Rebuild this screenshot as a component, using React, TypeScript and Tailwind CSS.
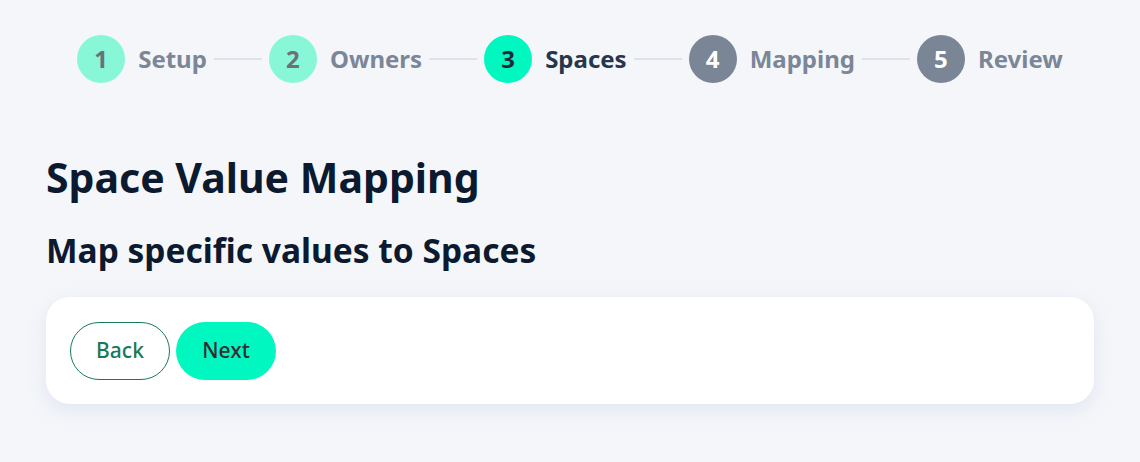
const steps = [
  { n: 1, label: 'Setup', state: 'done' },
  { n: 2, label: 'Owners', state: 'done' },
  { n: 3, label: 'Spaces', state: 'active' },
  { n: 4, label: 'Mapping', state: 'todo' },
  { n: 5, label: 'Review', state: 'todo' },
]

const circleClass = {
  done: 'bg-[#88f7d7] text-[#6e7077]',
  active: 'bg-[#00f7c0] text-[#1d2a3b]',
  todo: 'bg-[#7a8596] text-white',
}

const labelClass = {
  done: 'text-[#7b8698]',
  active: 'text-[#27364b]',
  todo: 'text-[#7b8698]',
}

const Stepper = () => (
  <div className="flex items-center justify-center">
    {steps.map((s, i) => (
      <div key={s.n} className="flex items-center">
        <div className="flex items-center gap-[13px]">
          <div
            className={`flex h-12 w-12 items-center justify-center rounded-full text-[24px] font-bold ${circleClass[s.state]}`}
          >
            {s.n}
          </div>
          <span className={`text-[24px] font-bold ${labelClass[s.state]}`}>{s.label}</span>
        </div>
        {i < steps.length - 1 && <div className="mx-[7px] h-[2px] w-12 bg-[#dde3ec]" />}
      </div>
    ))}
  </div>
)

export default function App() {
  return (
    <div
      className="min-h-[462px] bg-[#f4f6fa] px-[46px] pt-[35px]"
      style={{ fontFamily: '"Noto Sans", "Open Sans", sans-serif' }}
    >
      <Stepper />
      <h1 className="mt-[70px] text-[41px] leading-[48px] font-bold text-[#0c1a30]">
        Space Value Mapping
      </h1>
      <h2 className="mt-[29px] text-[33.5px] leading-[40px] font-bold text-[#0c1a30]">
        Map specific values to Spaces
      </h2>
      <div className="mt-[27px] flex gap-[6px] rounded-3xl bg-white px-6 pt-[25px] pb-6 shadow-[0_6px_18px_rgba(170,182,215,0.25)]">
        <button className="h-[58px] w-[100px] rounded-full border-[1.5px] border-[#167a5b] text-[21px] font-medium text-[#167a5b]">
          Back
        </button>
        <button className="h-[58px] w-[100px] rounded-full bg-[#00f7c0] text-[21px] font-medium text-[#362b33]">
          Next
        </button>
      </div>
    </div>
  )
}
